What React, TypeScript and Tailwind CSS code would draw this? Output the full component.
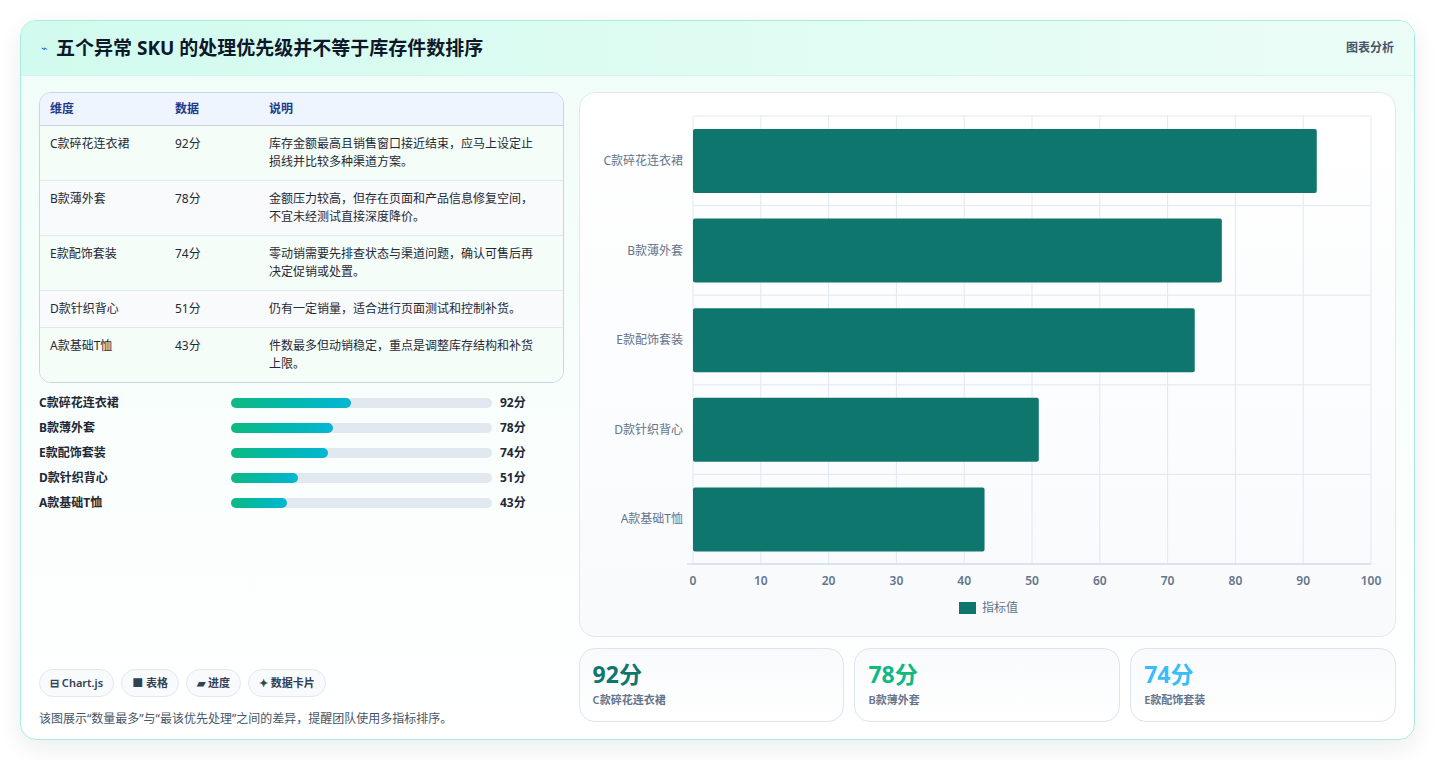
import React from "react";

const rows = [
  { name: "C款碎花连衣裙", v: 92, note: "库存金额最高且销售窗口接近结束，应马上设定止损线并比较多种渠道方案。" },
  { name: "B款薄外套", v: 78, note: "金额压力较高，但存在页面和产品信息修复空间，不宜未经测试直接深度降价。" },
  { name: "E款配饰套装", v: 74, note: "零动销需要先排查状态与渠道问题，确认可售后再决定促销或处置。" },
  { name: "D款针织背心", v: 51, note: "仍有一定销量，适合进行页面测试和控制补货。" },
  { name: "A款基础T恤", v: 43, note: "件数最多但动销稳定，重点是调整库存结构和补货上限。" },
];

function Chart() {
  const x0 = 113;
  const w = 678;
  const top = 23;
  const band = 89.6;
  return (
    <svg width="815" height="542" className="block" style={{ fontFamily: "'Noto Sans','Noto Sans CJK SC',sans-serif" }}>
      {Array.from({ length: 11 }).map((_, i) => (
        <line key={i} x1={x0 + (w * i) / 10} x2={x0 + (w * i) / 10} y1={top} y2={471} stroke="#e2e8f0" strokeWidth="1" />
      ))}
      {Array.from({ length: 6 }).map((_, i) => (
        <line key={i} x1={x0} x2={x0 + w} y1={top + band * i} y2={top + band * i} stroke="#e2e8f0" strokeWidth="1" />
      ))}
      <line x1={x0 - 6} x2={x0 + w} y1={471} y2={471} stroke="#cbd5e1" />
      {rows.map((r, i) => (
        <g key={r.name}>
          <rect x={x0} y={top + band * i + 13} width={(w * r.v) / 100} height={64} rx="2" fill="#0f766e" />
          <text x={103} y={top + band * i + 49} textAnchor="end" fontSize="12" fill="#64748b">{r.name}</text>
        </g>
      ))}
      {Array.from({ length: 11 }).map((_, i) => (
        <text key={i} x={x0 + (w * i) / 10} y={492} textAnchor="middle" fontSize="12" fontWeight="600" fill="#64748b">{i * 10}</text>
      ))}
      <rect x={379} y={509} width={17} height={12} fill="#0f766e" />
      <text x={402} y={519} fontSize="12" fill="#64748b">指标值</text>
    </svg>
  );
}

export default function App() {
  return (
    <div className="min-h-[760px] bg-white p-5" style={{ fontFamily: "'Noto Sans','Noto Sans CJK SC',sans-serif" }}>
      <div className="h-[720px] overflow-hidden rounded-2xl border border-[#a7ece0] bg-gradient-to-b from-[#f0fdf9] to-white shadow-[0_8px_24px_rgba(15,23,42,0.08)]">
        <div className="flex h-[55px] items-center justify-between border-b border-[#d5f5ec] bg-gradient-to-r from-[#d1fbee] to-[#ecfdf7] px-5">
          <div className="flex items-center gap-2">
            <span className="text-[11px] text-[#2563eb]">⌁</span>
            <h1 className="text-[19px] font-bold text-[#0f172a]">五个异常 SKU 的处理优先级并不等于库存件数排序</h1>
          </div>
          <span className="text-[12px] font-semibold text-[#475569]">图表分析</span>
        </div>
        <div className="flex gap-[15px] px-[18px] pt-4">
          <div className="flex h-[649px] w-[525px] flex-col">
            <div className="overflow-hidden rounded-xl border border-[#cbd5e1] text-[12px]">
              <div className="grid h-[33px] grid-cols-[125px_94px_1fr] items-center border-b border-[#cbd5e1] bg-[#eef5fe] px-[10px] font-semibold text-[#1e3a8a]">
                <span>维度</span><span>数据</span><span>说明</span>
              </div>
              {rows.map((r, i) => (
                <div key={r.name} className={`grid grid-cols-[125px_94px_1fr] items-start border-b border-[#e2e8f0] px-[10px] py-[9px] text-[#1f2937] last:border-b-0 ${i % 2 === 0 ? "bg-[#f4fdf8]" : "bg-[#f8fafc]"}`}>
                  <span className="leading-[17px]">{r.name}</span>
                  <span className="leading-[17px]">{r.v}分</span>
                  <span className="pr-3 leading-[18px]">{r.note}</span>
                </div>
              ))}
            </div>
            <div className="mt-[11px] flex flex-col gap-[7px]">
              {rows.map((r) => (
                <div key={r.name} className="flex h-[18px] items-center text-[12px] font-bold text-[#1f2937]">
                  <span className="w-[192px]">{r.name}</span>
                  <div className="h-[10px] w-[261px] rounded-full bg-[#e2e8f0]">
                    <div className="h-full rounded-full bg-gradient-to-r from-[#10b981] to-[#06b6d4]" style={{ width: `${r.v / 2}%` }} />
                  </div>
                  <span className="ml-[8px]">{r.v}分</span>
                </div>
              ))}
            </div>
            <div className="mt-auto pb-[13px]">
              <div className="flex gap-[7px]">
                {["⊟ Chart.js", "■ 表格", "▰ 进度", "✦ 数据卡片"].map((c) => (
                  <span key={c} className="flex h-[28px] items-center rounded-full border border-[#e2e8f0] bg-[#f8fafc] px-[10px] text-[11px] font-semibold text-[#334155]">{c}</span>
                ))}
              </div>
              <p className="mt-[13px] text-[12px] text-[#475569]">该图展示“数量最多”与“最该优先处理”之间的差异，提醒团队使用多指标排序。</p>
            </div>
          </div>
          <div className="flex w-[818px] flex-col gap-[11px]">
            <div className="h-[545px] rounded-2xl border border-[#e2e8f0] bg-gradient-to-b from-white to-[#f8fafc]">
              <Chart />
            </div>
            <div className="grid grid-cols-3 gap-[10px]">
              {[
                { v: "92分", n: "C款碎花连衣裙", c: "text-[#0f766e]" },
                { v: "78分", n: "B款薄外套", c: "text-[#10b981]" },
                { v: "74分", n: "E款配饰套装", c: "text-[#38bdf8]" },
              ].map((k) => (
                <div key={k.n} className="h-[74px] rounded-2xl border border-[#dbe4f0] bg-gradient-to-b from-[#f8fafc] to-white px-[13px] pt-[10px]">
                  <div className={`text-[23px] font-bold leading-[30px] ${k.c}`}>{k.v}</div>
                  <div className="mt-[3px] text-[11px] font-semibold text-[#64748b]">{k.n}</div>
                </div>
              ))}
            </div>
          </div>
        </div>
      </div>
    </div>
  );
}
